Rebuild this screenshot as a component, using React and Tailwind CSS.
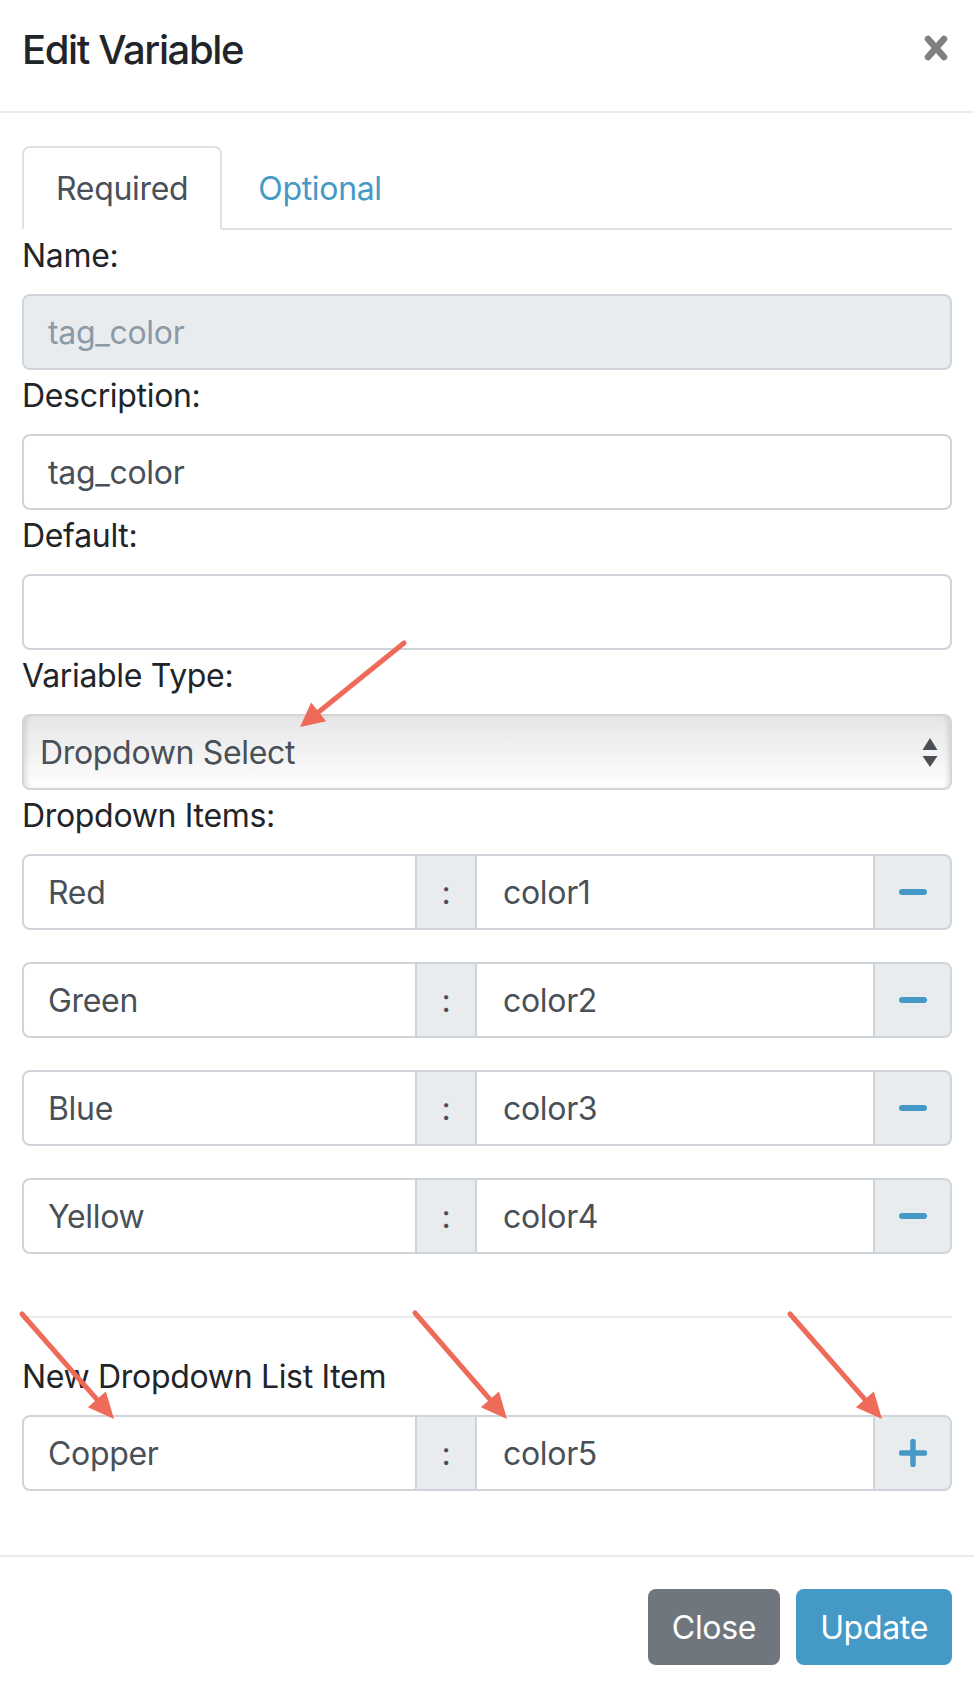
import React from "react";

const FONT = { fontFamily: "Inter, 'Noto Sans', 'Liberation Sans', sans-serif" };

function Arrow({ x1, y1, x2, y2, L = 26, w = 12 }) {
  const dx = x2 - x1;
  const dy = y2 - y1;
  const len = Math.sqrt(dx * dx + dy * dy);
  const ux = dx / len;
  const uy = dy / len;
  const bx = x2 - ux * L;
  const by = y2 - uy * L;
  const px = -uy * w;
  const py = ux * w;
  const pts = `${x2},${y2} ${bx + px},${by + py} ${bx - px},${by - py}`;
  return (
    <g>
      <line x1={x1} y1={y1} x2={bx + ux * 4} y2={by + uy * 4} stroke="#ee6b59" strokeWidth="5" strokeLinecap="round" />
      <polygon points={pts} fill="#ee6b59" />
    </g>
  );
}

function Label({ children }) {
  return <div className="text-[32px] pt-[3px] leading-[45px] text-[#212529] mb-[16px]">{children}</div>;
}

function TextInput({ value, disabled }) {
  return (
    <div
      className={
        "h-[76px] w-full rounded-[8px] border-2 border-[#ced4da] pl-[24px] pt-[2px] flex items-center text-[32px] " +
        (disabled ? "bg-[#e9ecef] text-[#8c99a6]" : "bg-white text-[#495057]")
      }
    >
      {value}
    </div>
  );
}

function Minus() {
  return <div className="w-[28px] h-[6px] rounded-full bg-[#4499c6]" />;
}

function Plus() {
  return (
    <svg width="28" height="28" viewBox="0 0 28 28">
      <line x1="14" y1="2.5" x2="14" y2="25.5" stroke="#4499c6" strokeWidth="5.5" strokeLinecap="round" />
      <line x1="2.5" y1="14" x2="25.5" y2="14" stroke="#4499c6" strokeWidth="5.5" strokeLinecap="round" />
    </svg>
  );
}

function ItemRow({ name, value, plus, className = "" }) {
  return (
    <div className={"flex h-[76px] text-[32px] text-[#495057] " + className}>
      <div className="w-[395px] border-2 border-[#ced4da] rounded-l-[8px] pl-[24px] pt-[2px] flex items-center bg-white">{name}</div>
      <div className="w-[60px] border-y-2 border-r-2 border-[#ced4da] bg-[#e9ecef] pt-[2px] flex items-center justify-center">:</div>
      <div className="w-[396px] border-y-2 border-[#ced4da] pl-[26px] pt-[2px] flex items-center bg-white">{value}</div>
      <div className="w-[79px] border-2 border-[#ced4da] rounded-r-[8px] bg-[#e9ecef] flex items-center justify-center">
        {plus ? <Plus /> : <Minus />}
      </div>
    </div>
  );
}

export default function App() {
  const items = [
    ["Red", "color1"],
    ["Green", "color2"],
    ["Blue", "color3"],
    ["Yellow", "color4"],
  ];
  return (
    <div className="relative w-[974px] h-[1688px] bg-white overflow-hidden tracking-[-0.02em]" style={FONT}>
      {/* Header */}
      <div className="flex justify-between items-start px-[22px] pt-[20px] h-[113px] border-b-2 border-[#e9ecef]">
        <div className="text-[40px] leading-[60px] font-medium text-[#212529] tracking-[-0.035em]">Edit Variable</div>
        <svg className="mt-[15px] mr-[4px]" width="24" height="26" viewBox="0 0 24 26">
          <line x1="4" y1="4" x2="20" y2="22" stroke="#808080" strokeWidth="6.5" strokeLinecap="round" />
          <line x1="20" y1="4" x2="4" y2="22" stroke="#808080" strokeWidth="6.5" strokeLinecap="round" />
        </svg>
      </div>

      {/* Body */}
      <div className="px-[22px] pt-[33px] pb-[32px]">
        <div className="flex border-b-2 border-[#dee2e6] text-[32px] leading-[48px]">
          <div className="-mb-[2px] border-2 border-[#dee2e6] border-b-white rounded-t-[8px] px-[32px] pt-[17px] pb-[13px] text-[#495057] bg-white">
            Required
          </div>
          <div className="px-[34px] pt-[17px] pb-[13px] border-2 border-transparent text-[#4499c6]">Optional</div>
        </div>

        <Label>Name:</Label>
        <TextInput value="tag_color" disabled />
        <Label>Description:</Label>
        <TextInput value="tag_color" />
        <Label>Default:</Label>
        <TextInput value="" />
        <Label>Variable Type:</Label>
        <div className="relative h-[76px] w-full rounded-[8px] border-2 border-[#d3d6d9] bg-linear-to-b from-[#e6e6e6] to-[#fefefe] shadow-[inset_5px_0_5px_-3px_rgba(0,0,0,0.12),inset_-5px_0_5px_-3px_rgba(0,0,0,0.12)] pl-[16px] pr-[12px] pt-[2px] flex items-center justify-between text-[32px] text-[#495057]">
          <span>Dropdown Select</span>
          <svg width="16" height="30" viewBox="0 0 16 30">
            <polygon points="8,0 15.5,12 0.5,12" fill="#4a4f55" />
            <polygon points="0.5,18 15.5,18 8,29" fill="#4a4f55" />
          </svg>
        </div>
        <Label>Dropdown Items:</Label>
        {items.map(([n, v]) => (
          <ItemRow key={n} name={n} value={v} className="mb-[32px]" />
        ))}

        <div className="mt-[62px] mb-[33px] border-t-2 border-[#e9ecef]" />
        <Label>New Dropdown List Item</Label>
        <ItemRow name="Copper" value="color5" plus />
      </div>

      {/* Footer */}
      <div className="mt-[32px] border-t-2 border-[#e9ecef] px-[22px] pt-[32px] flex justify-end gap-[16px]">
        <div className="h-[76px] px-[24px] pt-[2px] rounded-[8px] bg-[#6f767e] text-white text-[32px] flex items-center">Close</div>
        <div className="h-[76px] px-[24px] pt-[2px] rounded-[8px] bg-[#4499c6] text-white text-[32px] flex items-center">Update</div>
      </div>

      {/* Annotation arrows */}
      <svg className="absolute inset-0 pointer-events-none" width="974" height="1688" viewBox="0 0 974 1688">
        <Arrow x1={404} y1={643} x2={300} y2={727} L={24} w={12} />
        <Arrow x1={22} y1={1314} x2={114} y2={1419} />
        <Arrow x1={415} y1={1313} x2={507} y2={1419} />
        <Arrow x1={790} y1={1314} x2={882} y2={1419} />
      </svg>
    </div>
  );
}
